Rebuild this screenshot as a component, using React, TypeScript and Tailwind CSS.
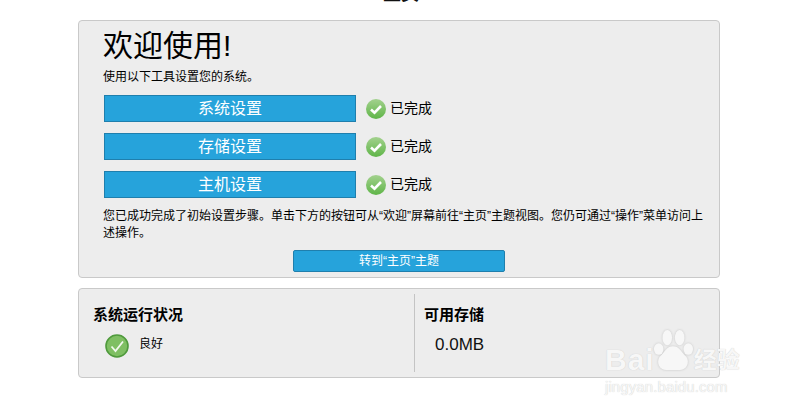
const CN = "font-['Liberation_Sans','Noto_Sans_CJK_SC',sans-serif]";

const CheckBadge = () => (
  <svg width="20" height="20" viewBox="0 0 20 20" className="shrink-0">
    <defs>
      <linearGradient id="done" x1="0" y1="0" x2="0" y2="1">
        <stop offset="0" stopColor="#a3d18e" />
        <stop offset="1" stopColor="#5fb548" />
      </linearGradient>
    </defs>
    <circle cx="10" cy="10" r="10" fill="url(#done)" />
    <path d="M5 10.5l3.5 3.2L15 7" fill="none" stroke="#fff" strokeWidth="2.6" />
  </svg>
);

const OkBadge = () => (
  <svg width="24" height="24" viewBox="0 0 24 24" className="shrink-0">
    <circle cx="12" cy="12" r="11" fill="#7fbf63" stroke="#4f9a3c" strokeWidth="1.6" />
    <path d="M6.5 12.5l4 4.5L18 7.5" fill="none" stroke="#f2f8ee" strokeWidth="1.8" />
  </svg>
);

const SetupRow = ({ label }: { label: string }) => (
  <div className="flex items-center">
    <button className="w-[252px] h-[27px] bg-[#26a3db] border border-[#1f7fad] text-white text-[16px] leading-[25px]">
      {label}
    </button>
    <div className="ml-[10px]"><CheckBadge /></div>
    <span className="ml-[4px] text-[14px] text-black">已完成</span>
  </div>
);

const Watermark = () => (
  <div className="absolute left-[605px] top-[328px] w-[142px] h-[68px] text-[#f7f7f7] pointer-events-none [text-shadow:0_0_1px_#c4c4c4]">
    <div className="flex items-start h-[50px]">
      <span className="font-['Liberation_Sans',sans-serif] font-bold text-[30px] leading-[34px] mt-[15px] tracking-[1px]">Bai</span>
      <svg width="42" height="46" viewBox="0 0 44 46" className="-ml-[3px] shrink-0 drop-shadow-[0_0_1px_#c4c4c4]">
        <ellipse cx="16" cy="9" rx="5" ry="8" fill="#f7f7f7" />
        <ellipse cx="29" cy="9" rx="5" ry="8" fill="#f7f7f7" />
        <ellipse cx="7" cy="21" rx="5" ry="6" fill="#f7f7f7" />
        <ellipse cx="38" cy="21" rx="5" ry="6" fill="#f7f7f7" />
        <path d="M22 18c7 0 9 7 14 11 4 6 0 14-7 14H15c-7 0-11-8-7-14 5-4 7-11 14-11z" fill="#f7f7f7" />
      </svg>
      <span className="text-[23px] leading-[30px] mt-[17px] font-bold">经验</span>
    </div>
    <div className="font-['Liberation_Sans',sans-serif] text-[15px] leading-[18px] tracking-[0.1px] whitespace-nowrap">jingyan.baidu.com</div>
  </div>
);

export default function App() {
  return (
    <div className={`relative w-[788px] h-[413px] overflow-hidden bg-white ${CN}`}>
      <div className="h-[20px] overflow-hidden pl-[383px]">
        <h2 className="text-[18px] leading-[18px] -mt-[15px] text-[#111] font-semibold">主页</h2>
      </div>

      <div className="ml-[78px] w-[642px]">
        <div className="h-[258px] bg-[#ededed] border border-[#c9c9c9] rounded-[4px] pl-[25px] pr-[10px]">
          <h1 className="text-[30px] leading-[36px] mt-[7px] -ml-[1px] text-black">欢迎使用!</h1>
          <p className="text-[12px] leading-[16px] mt-[5px] -ml-[1px] text-black">使用以下工具设置您的系统。</p>
          <div className="flex flex-col gap-[11px] mt-[10px]">
            <SetupRow label="系统设置" />
            <SetupRow label="存储设置" />
            <SetupRow label="主机设置" />
          </div>
          <p className="text-[12px] leading-[17px] mt-[10px] -ml-[1px] text-black">
            您已成功完成了初始设置步骤。单击下方的按钮可从“欢迎”屏幕前往“主页”主题视图。您仍可通过“操作”菜单访问上述操作。
          </p>
          <div className="flex justify-center mt-[8px] pr-[15px]">
            <button className="w-[212px] h-[22px] bg-[#26a3db] border border-[#1f7fad] rounded-[2px] text-white text-[12px] leading-[20px]">
              转到“主页”主题
            </button>
          </div>
        </div>

        <div className="mt-[10px] h-[90px] bg-[#ededed] border border-[#c9c9c9] rounded-[4px] flex py-[5px]">
          <div className="w-[336px] border-r border-[#c4c4c4] pl-[14px]">
            <h3 className="text-[15px] leading-[18px] font-bold text-black mt-[12px]">系统运行状况</h3>
            <div className="flex items-start mt-[10px] ml-[12px]">
              <OkBadge />
              <span className="text-[12px] leading-[16px] ml-[10px] mt-[2px] text-black">良好</span>
            </div>
          </div>
          <div className="pl-[9px]">
            <h3 className="text-[15px] leading-[18px] font-bold text-black mt-[12px]">可用存储</h3>
            <div className="text-[17px] leading-[20px] ml-[11px] mt-[11px] text-[#111]">0.0MB</div>
          </div>
        </div>
      </div>

      <Watermark />
    </div>
  );
}
